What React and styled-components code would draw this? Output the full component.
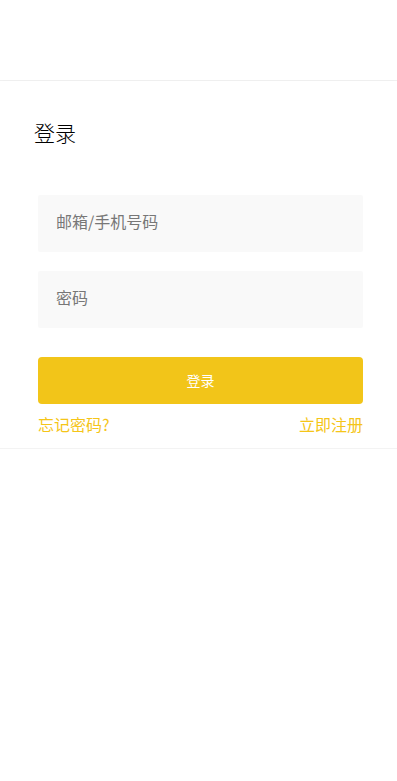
import React from 'react'
import styled, { createGlobalStyle } from 'styled-components'

const Global = createGlobalStyle`
  *, *::before, *::after {
    box-sizing: border-box;
  }
  body {
    margin: 0;
    background: #fff;
    font-family: "Noto Sans CJK SC", "Noto Sans", sans-serif;
  }
`

const Header = styled.div`
  height: 81px;
  border-bottom: 1px solid #f0f0f0;
`

const Panel = styled.div`
  padding: 37px 0 13px;
  box-shadow: 0 3px 4px rgba(0, 0, 0, 0.09);
  border-bottom: 1px solid #f3f3f3;
`

const Title = styled.h2`
  margin: 0 0 49px;
  padding: 0 34px;
  font-size: 21px;
  line-height: 28px;
  font-weight: 300;
  color: #000;
`

const Form = styled.form`
  display: flex;
  flex-direction: column;
  padding: 0 34px 0 38px;
`

const Field = styled.input`
  height: 57px;
  margin-bottom: ${props => props.gap}px;
  border: none;
  outline: none;
  border-radius: 2px;
  background: #f9f9f9;
  padding: 0 18px 5px;
  font-family: inherit;
  font-size: 16px;
  color: #333;
  &::placeholder {
    color: #777;
  }
`

const Submit = styled.button`
  height: 47px;
  border: none;
  border-radius: 4px;
  background: #f2c519;
  color: #fff;
  font-family: inherit;
  font-size: 14px;
  padding-bottom: 2px;
  cursor: pointer;
`

const Links = styled.div`
  display: flex;
  justify-content: space-between;
  margin-top: 9px;
`

const Link = styled.a`
  font-size: 16px;
  line-height: 22px;
  color: #f5c518;
  text-decoration: none;
`

export default function App() {
  return (
    <>
      <Global />
      <Header />
      <Panel>
        <Title>登录</Title>
        <Form onSubmit={e => e.preventDefault()}>
          <Field placeholder="邮箱/手机号码" gap={19} />
          <Field type="password" placeholder="密码" gap={29} />
          <Submit type="submit">登录</Submit>
          <Links>
            <Link href="#">忘记密码?</Link>
            <Link href="#">立即注册</Link>
          </Links>
        </Form>
      </Panel>
    </>
  )
}
